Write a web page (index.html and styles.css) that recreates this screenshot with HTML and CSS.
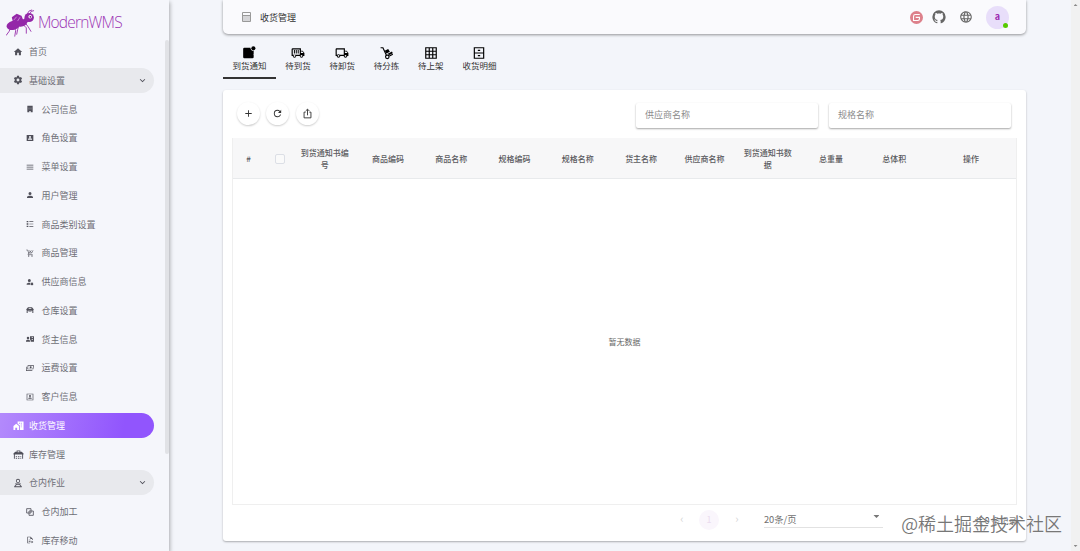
FILE: index.html
```html
<!DOCTYPE html>
<html lang="zh-CN">
<head>
  <meta charset="UTF-8">
  <meta name="viewport" content="width=device-width, initial-scale=1.0">
  <title>ModernWMS</title>
  <link rel="stylesheet" href="styles.css">
</head>
<body>
  <div class="app">
    <aside class="sidebar">
      <div class="logo">
        <svg class="ant" viewBox="0 0 30 28">
          <g fill="#9427a8">
            <ellipse cx="7.5" cy="16.500" rx="7" ry="4.6" transform="rotate(-14 7.5 16.5)"/>
            <ellipse cx="16.5" cy="14" rx="5.500" ry="3.6" transform="rotate(-18 16.5 14)"/>
            <path d="M6 8l5-3.500 5 2 2 5-6 3-5-2z"/>
            <ellipse cx="24" cy="8.3" rx="4.9" ry="4.6"/>
            <path d="M17 12l4-5 4 4-6 5z"/>
          </g>
          <g fill="none" stroke="#9427a8" stroke-width="0.9">
            <path d="M5 19l-2 4-3 4M9 19l1 3-1 6M13 17l-1 4-1 5M18 16l3 3 0 6M20 14l3 4 3 5M22 4.500l2-3 3-1M25 4l1-2 3-.8"/>
          </g>
          <path d="M8 11l3-3.500M12 12l2.500-4" stroke="#e9c8f0" stroke-width="0.6"/>
          <circle cx="25" cy="7.500" r="1.800" fill="#fff"/>
          <circle cx="25.200" cy="7.600" r="0.900" fill="#6a1680"/>
        </svg>
        <span class="logo-text">ModernWMS</span>
      </div>

      <nav class="menu">
        <div class="item">
          <svg viewBox="0 0 24 24"><path d="M10,20V14H14V20H19V12H22L12,3L2,12H5V20H10Z"/></svg>
          <span>首页</span>
        </div>
        <div class="item open">
          <svg viewBox="0 0 24 24"><path d="M12,15.5A3.5,3.5 0 0,1 8.5,12A3.5,3.5 0 0,1 12,8.5A3.5,3.5 0 0,1 15.5,12A3.5,3.5 0 0,1 12,15.5M19.43,12.97C19.47,12.65 19.5,12.33 19.5,12C19.5,11.67 19.47,11.34 19.43,11L21.54,9.37C21.73,9.22 21.78,8.95 21.66,8.73L19.66,5.27C19.54,5.05 19.27,4.96 19.05,5.05L16.56,6.05C16.04,5.66 15.5,5.32 14.87,5.07L14.5,2.42C14.46,2.18 14.25,2 14,2H10C9.75,2 9.54,2.18 9.5,2.42L9.13,5.07C8.5,5.32 7.96,5.66 7.44,6.05L4.95,5.05C4.73,4.96 4.46,5.05 4.34,5.27L2.34,8.73C2.21,8.95 2.27,9.22 2.46,9.37L4.57,11C4.53,11.34 4.5,11.67 4.5,12C4.5,12.33 4.53,12.65 4.57,12.97L2.46,14.63C2.27,14.78 2.21,15.05 2.34,15.27L4.34,18.73C4.46,18.95 4.73,19.03 4.95,18.95L7.44,17.94C7.96,18.34 8.5,18.68 9.13,18.93L9.5,21.58C9.54,21.82 9.75,22 10,22H14C14.25,22 14.46,21.82 14.5,21.58L14.87,18.93C15.5,18.67 16.04,18.34 16.56,17.94L19.05,18.95C19.27,19.03 19.54,18.95 19.66,18.73L21.66,15.27C21.78,15.05 21.73,14.78 21.54,14.63L19.43,12.97Z"/></svg>
          <span>基础设置</span>
          <svg class="arrow" viewBox="0 0 24 24"><path d="M7.41,8.58L12,13.17L16.59,8.58L18,10L12,16L6,10L7.41,8.58Z"/></svg>
        </div>
        <div class="item sub">
          <svg viewBox="0 0 24 24"><path fill-rule="evenodd" d="M4 2h16v20h-6v-4h-4v4H4zM8 6v1h2V6zm6 0v1h2V6zM8 10v1h2v-1zm6 0v1h2v-1zM8 14v1h2v-1zm6 0v1h2v-1z"/></svg>
          <span>公司信息</span>
        </div>
        <div class="item sub">
          <svg viewBox="0 0 24 24"><path fill-rule="evenodd" d="M2 3h20v18H2zM12 6a3 3 0 0 0 0 6a3 3 0 0 0 0-6M6 17h12v-1c0-2-4-3-6-3s-6 1-6 3z"/></svg>
          <span>角色设置</span>
        </div>
        <div class="item sub">
          <svg viewBox="0 0 24 24"><path d="M2,5H22V7.500H2V5M2,11H22V13.500H2V11M2,17H22V19.500H2V17Z"/></svg>
          <span>菜单设置</span>
        </div>
        <div class="item sub">
          <svg viewBox="0 0 24 24"><path d="M12,3A4.500,4.500 0 0,1 16.500,7.500A4.500,4.500 0 0,1 12,12A4.500,4.500 0 0,1 7.500,7.500A4.500,4.500 0 0,1 12,3M12,14C16.42,14 21,15.79 21,18V21H3V18C3,15.79 7.58,14 12,14Z"/></svg>
          <span>用户管理</span>
        </div>
        <div class="item sub">
          <svg viewBox="0 0 24 24"><path d="M2 3h5v4H2zM10 4h12v2H10zM2 10h5v4H2zM10 11h12v2H10zM2 17h5v4H2zM10 18h12v2H10z"/></svg>
          <span>商品类别设置</span>
        </div>
        <div class="item sub">
          <svg viewBox="0 0 24 24"><path d="M1 3h4l3 9h9l4-8M8 12l-2 5h14M9 4l7 7M16 4l-6 7" fill="none" stroke="#50505a" stroke-width="2"/><circle cx="8" cy="21" r="2"/><circle cx="18" cy="21" r="2"/></svg>
          <span>商品管理</span>
        </div>
        <div class="item sub">
          <svg viewBox="0 0 24 24"><path d="M10 3a4.500 4.500 0 1 1 0 9a4.500 4.500 0 0 1 0-9M2 20v-2c0-2.200 3.600-4 8-4h3v6zM18 13l1 1.500 2-.5 1 2-1.500 1.500 1.500 2-1 2-2-.5-1 1.500-1-1.500-2 .5-1-2 1.500-2-1.500-1.500 1-2 2 .5z"/></svg>
          <span>供应商信息</span>
        </div>
        <div class="item sub">
          <svg viewBox="0 0 24 24"><path fill-rule="evenodd" d="M1 10l5-6h12l5 6v2h-1v9h-3v-7H5v7H2v-9H1zM8 6v2h8V6zM8 16h3v2H8zM13 16h3v2h-3z"/></svg>
          <span>仓库设置</span>
        </div>
        <div class="item sub">
          <svg class="wide" viewBox="0 0 24 24"><path fill-rule="evenodd" d="M6 5a3.800 3.800 0 1 1 0 7.600a3.800 3.800 0 0 1 0-7.600M0 20v-2c0-3 3-4 6-4s6 1 6 4v2zM12 4h12v16H14v-3l-2-4zM17 7v2h4V7zM17 12v2h4v-2z"/></svg>
          <span>货主信息</span>
        </div>
        <div class="item sub">
          <svg viewBox="0 0 24 24"><path fill-rule="evenodd" d="M5 4h19l-2 12H4zM7 6L6 14h14l1.500-8zM14 7a3 3 0 1 1 0 6a3 3 0 0 1 0-6M0 8h2v11h17v2H0z"/></svg>
          <span>运费设置</span>
        </div>
        <div class="item sub">
          <svg viewBox="0 0 24 24"><path fill-rule="evenodd" d="M2 2h20v20H2zM4 4v16h16V4zM12 6a3 3 0 1 1 0 6a3 3 0 0 1 0-6M7 17v-1c0-3 10-3 10 0v1z"/></svg>
          <span>客户信息</span>
        </div>
        <div class="item active">
          <svg class="big" viewBox="0 0 24 24"><path fill-rule="evenodd" d="M1 13l6-5 6 5v9H9v-5H5v5H1zM10 3h13v19h-8V12l-5-4zM13 6v2h2V6zm4 0v2h2V6zm0 4v2h2v-2zm0 4v2h2v-2z"/></svg>
          <span>收货管理</span>
        </div>
        <div class="item">
          <svg class="big" viewBox="0 0 24 24"><path fill-rule="evenodd" d="M1 10l4-4h3V3h8v3h3l4 4v2h-1v9h-2v-9H4v9H2v-9H1zM10 5v2h4V5zM6 15h3v2H6zM11 15h3v2h-3zM16 15h2v2h-2zM6 19h3v2H6zM11 19h3v2h-3zM16 19h2v2h-2z"/></svg>
          <span>库存管理</span>
        </div>
        <div class="item open">
          <svg viewBox="0 0 24 24"><path fill-rule="evenodd" d="M12 2a5 5 0 1 1 0 10a5 5 0 0 1 0-10M12 4a3 3 0 1 0 0 6a3 3 0 0 0 0-6M5 13h14v2H5zM8 15h8l5 5v2H3v-2zM9 16l-3 4h12l-3-4z"/></svg>
          <span>仓内作业</span>
          <svg class="arrow" viewBox="0 0 24 24"><path d="M7.41,8.58L12,13.17L16.59,8.58L18,10L12,16L6,10L7.41,8.58Z"/></svg>
        </div>
        <div class="item sub">
          <svg viewBox="0 0 24 24"><path d="M2 2h13v13H2zM9 9h13v13H9z" fill="none" stroke="#50505a" stroke-width="2.500"/></svg>
          <span>仓内加工</span>
        </div>
        <div class="item sub">
          <svg viewBox="0 0 24 24"><path fill-rule="evenodd" d="M4 2h10l6 6v4h-2V9h-5V4H6v16h6v2H4zM8 11h6v2H8zM8 15h5v2H8zM17 14l5 4-5 4v-3h-4v-2h4z"/></svg>
          <span>库存移动</span>
        </div>
      </nav>
      <div class="side-thumb"></div>
    </aside>

    <main class="main">
      <header class="header">
        <svg class="page-icon" viewBox="0 0 9 10"><path fill="#d5d5d8" d="M1 4h7v5H1z"/><path fill="none" stroke="#999" d="M.5.5h8v9h-8zM0 3.500h9"/></svg>
        <span class="title">收货管理</span>
        <div class="tools">
          <svg class="gitee" viewBox="0 0 24 24"><circle cx="12" cy="12" r="12" fill="#dd808b"/><path d="M18 6.500h-8q-3.500 0-3.500 3.500v7.500h8q3 0 3-3v-2.700h-7" fill="none" stroke="#fff" stroke-width="2"/></svg>
          <svg class="github" viewBox="0 0 24 24"><path d="M12,2A10,10 0 0,0 2,12C2,16.42 4.87,20.17 8.84,21.5C9.34,21.58 9.5,21.27 9.5,21C9.5,20.77 9.5,20.14 9.5,19.31C6.73,19.91 6.14,17.97 6.14,17.97C5.68,16.81 5.03,16.5 5.03,16.5C4.12,15.88 5.1,15.9 5.1,15.9C6.1,15.97 6.63,16.93 6.63,16.93C7.5,18.45 8.97,18 9.54,17.76C9.63,17.11 9.89,16.67 10.17,16.42C7.95,16.17 5.62,15.31 5.62,11.5C5.62,10.39 6,9.5 6.65,8.79C6.55,8.54 6.2,7.5 6.75,6.15C6.75,6.15 7.59,5.88 9.5,7.17C10.29,6.95 11.15,6.84 12,6.84C12.85,6.84 13.71,6.95 14.5,7.17C16.41,5.88 17.25,6.15 17.25,6.15C17.8,7.5 17.45,8.54 17.35,8.79C18,9.5 18.38,10.39 18.38,11.5C18.38,15.32 16.04,16.16 13.81,16.41C14.17,16.72 14.5,17.33 14.5,18.26C14.5,19.6 14.5,20.68 14.5,21C14.5,21.27 14.66,21.59 15.17,21.5C19.14,20.16 22,16.42 22,12A10,10 0 0,0 12,2Z"/></svg>
          <svg class="web" viewBox="0 0 24 24"><path d="M16.36,14C16.44,13.34 16.5,12.68 16.5,12C16.5,11.32 16.44,10.66 16.36,10H19.74C19.9,10.64 20,11.31 20,12C20,12.69 19.9,13.36 19.74,14M14.59,19.56C15.19,18.45 15.65,17.25 15.97,16H18.92C17.96,17.65 16.43,18.93 14.59,19.56M14.34,14H9.66C9.56,13.34 9.5,12.68 9.5,12C9.5,11.32 9.56,10.65 9.66,10H14.34C14.43,10.65 14.5,11.32 14.5,12C14.5,12.68 14.43,13.34 14.34,14M12,19.96C11.17,18.76 10.5,17.43 10.09,16H13.91C13.5,17.43 12.83,18.76 12,19.96M8,8H5.08C6.03,6.34 7.57,5.06 9.4,4.44C8.8,5.55 8.35,6.75 8,8M5.08,16H8C8.35,17.25 8.8,18.45 9.4,19.56C7.57,18.93 6.03,17.65 5.08,16M4.26,14C4.1,13.36 4,12.69 4,12C4,11.31 4.1,10.64 4.26,10H7.64C7.56,10.66 7.5,11.32 7.5,12C7.5,12.68 7.56,13.34 7.64,14M12,4.03C12.83,5.23 13.5,6.57 13.91,8H10.09C10.5,6.57 11.17,5.23 12,4.03M18.92,8H15.97C15.65,6.75 15.19,5.55 14.59,4.44C16.43,5.07 17.96,6.34 18.92,8M12,2C6.47,2 2,6.5 2,12A10,10 0 0,0 12,22A10,10 0 0,0 22,12A10,10 0 0,0 12,2Z"/></svg>
          <div class="avatar">a<i class="online"></i></div>
        </div>
      </header>

      <div class="tabs">
        <div class="tab selected">
          <svg viewBox="0 0 24 24"><circle cx="19.500" cy="4" r="3.500"/><path d="M4 3h10.500c0 3.500 2 5.500 5.500 5.500V14l-6 7H4q-2 0-2-2V5q0-2 2-2z"/><path d="M14 21v-6h6v4q0 2-2 2z"/></svg>
          <span>到货通知</span>
        </div>
        <div class="tab">
          <svg viewBox="0 0 24 24"><path fill-rule="evenodd" d="M3 4h14v4h3l3 4v5h-2a3 3 0 0 1-6 0H9a3 3 0 0 1-6 0H1V6q0-2 2-2M3 6v9h12V6zM17 9.500V12h4.500l-2-2.500zM6 15.500a1.500 1.500 0 1 0 0 3a1.500 1.500 0 0 0 0-3M18 15.500a1.500 1.500 0 1 0 0 3a1.500 1.500 0 0 0 0-3M5 7h1.700v6H5zM8.200 7h1.700v6H8.200zM11.500 7h1.700v6h-1.700z"/></svg>
          <span>待到货</span>
        </div>
        <div class="tab">
          <svg viewBox="0 0 24 24"><path d="M18 18.5C18.83 18.5 19.5 17.83 19.5 17C19.5 16.17 18.83 15.5 18 15.5C17.17 15.5 16.5 16.17 16.5 17C16.5 17.83 17.17 18.5 18 18.5M19.5 9.5H17V12H21.46L19.5 9.5M6 18.5C6.83 18.5 7.5 17.83 7.5 17C7.5 16.17 6.83 15.5 6 15.5C5.17 15.5 4.5 16.17 4.5 17C4.5 17.83 5.17 18.5 6 18.5M20 8L23 12V17H21C21 18.66 19.66 20 18 20C16.34 20 15 18.66 15 17H9C9 18.66 7.66 20 6 20C4.34 20 3 18.66 3 17H1V6C1 4.89 1.89 4 3 4H17V8H20M3 6V15H3.76C4.31 14.39 5.11 14 6 14C6.89 14 7.69 14.39 8.24 15H15V6H3Z"/></svg>
          <span>待卸货</span>
        </div>
        <div class="tab">
          <svg viewBox="0 0 24 24"><path d="M1 3h4l6 13" fill="none" stroke="#000" stroke-width="2"/><path d="M8 8l6-3 3 5-6 3zM12.500 13.500l8-4 1.500 3-6 3z"/><circle cx="12.500" cy="18.500" r="3" fill="none" stroke="#000" stroke-width="2"/><path d="M16 17l6-3" stroke="#000" stroke-width="2"/></svg>
          <span>待分拣</span>
        </div>
        <div class="tab">
          <svg viewBox="0 0 24 24"><path d="M3 3h18v18H3zM9 3v18M15 3v18M3 9h18M3 15h18" fill="none" stroke="#000" stroke-width="2"/></svg>
          <span>待上架</span>
        </div>
        <div class="tab">
          <svg viewBox="0 0 24 24"><path d="M4 3h16v18H4zM4 12h16M10 7.500h4M10 16.500h4" fill="none" stroke="#000" stroke-width="2"/></svg>
          <span>收货明细</span>
        </div>
      </div>

      <section class="card">
        <div class="toolbar">
          <div class="round"><svg viewBox="0 0 24 24"><path d="M19,13H13V19H11V13H5V11H11V5H13V11H19V13Z"/></svg></div>
          <div class="round"><svg viewBox="0 0 24 24"><path d="M17.65,6.35C16.2,4.9 14.21,4 12,4A8,8 0 0,0 4,12A8,8 0 0,0 12,20C15.73,20 18.84,17.45 19.73,14H17.65C16.83,16.33 14.61,18 12,18A6,6 0 0,1 6,12A6,6 0 0,1 12,6C13.66,6 15.14,6.69 16.22,7.78L13,11H20V4L17.65,6.35Z"/></svg></div>
          <div class="round"><svg viewBox="0 0 24 24"><path d="M8 9H4.500v12.500h15V9H16M12 16V3M8 6.500l4-4 4 4" fill="none" stroke="#333" stroke-width="2"/></svg></div>
          <div class="search first">供应商名称</div>
          <div class="search">规格名称</div>
        </div>

        <div class="table">
          <div class="thead">
            <div>#</div>
            <div><i class="check"></i></div>
            <div>到货通知书编号</div>
            <div>商品编码</div>
            <div>商品名称</div>
            <div>规格编码</div>
            <div>规格名称</div>
            <div>货主名称</div>
            <div>供应商名称</div>
            <div>到货通知书数据</div>
            <div>总重量</div>
            <div>总体积</div>
            <div>操作</div>
          </div>
          <div class="empty">暂无数据</div>
        </div>

        <div class="pager">
          <span class="prev">‹</span>
          <span class="page">1</span>
          <span class="next">›</span>
          <div class="select">20条/页<i class="caret"></i></div>
          <span class="total">共 0 条记录</span>
        </div>
      </section>
    </main>

    <div class="scrollbar">
      <i class="up"></i>
      <i class="down"></i>
    </div>
  </div>
  <div class="watermark">@稀土掘金技术社区</div>
</body>
</html>
```

FILE: styles.css
```css
* {
  box-sizing: border-box;
}
body {
  margin: 0;
  height: 551px;
  overflow: hidden;
  position: relative;
  background-color: #f3f5fa;
  font-family: "Noto Sans CJK SC", "Noto Sans", sans-serif;
  font-size: 9px;
  color: #666;
}
svg {
  display: block;
  flex: none;
}
.app {
  display: flex;
  height: 551px;
}

/* sidebar */
.sidebar {
  position: relative;
  width: 169px;
  flex: none;
  overflow: hidden;
  background-color: #f5f6fb;
  box-shadow: 1px 2px 4px rgba(0, 0, 0, 0.3);
}
.logo {
  display: flex;
  height: 37px;
  padding: 9px 0 0 6px;
}
.ant {
  width: 29px;
  height: 28px;
}
.logo-text {
  margin-left: 3px;
  font-family: "Open Sans", sans-serif;
  font-weight: 300;
  font-size: 15.500px;
  line-height: 27px;
  letter-spacing: -0.800px;
  color: #9c35b4;
}
.menu {
  padding-top: 2px;
}
.item {
  display: flex;
  align-items: center;
  width: 153.500px;
  height: 25px;
  margin-bottom: 3.750px;
  padding-left: 13px;
  border-radius: 0 13px 13px 0;
  color: #6e6e76;
}
.item svg {
  width: 10px;
  height: 10px;
  margin-right: 6px;
  fill: #50505a;
}
.item svg.big {
  width: 11px;
  height: 11px;
  margin: 0 5.500px 0 -0.500px;
}
.item.sub {
  padding-left: 26px;
}
.item.sub svg {
  width: 8px;
  height: 8px;
  margin-right: 7.500px;
}
.item.open {
  background-color: #e8e9ed;
}
.item svg.arrow {
  margin: 0 6px 0 auto;
  width: 11px;
  height: 11px;
}
.item.active {
  color: #fff;
  background: linear-gradient(100deg, #b38afc, #9155fd 80%);
}
.item.active svg {
  fill: #fff;
}
.side-thumb {
  position: absolute;
  top: 40px;
  right: 0;
  width: 4px;
  height: 414px;
  border-radius: 2px;
  background-color: #e1e2e6;
}

/* main */
.main {
  width: 803px;
  margin-left: 54px;
}
.header {
  display: flex;
  align-items: center;
  height: 34px;
  padding: 0 17px 0 19px;
  border-radius: 0 0 5px 5px;
  background-color: #fafafd;
  box-shadow: 0 1px 3px rgba(0, 0, 0, 0.4);
}
.page-icon {
  width: 9px;
  height: 10px;
}
.title {
  margin-left: 9px;
  color: #333;
}
.tools {
  display: flex;
  align-items: center;
  margin-left: auto;
  fill: #666;
}
.gitee {
  width: 13px;
  height: 13px;
}
.github {
  width: 16px;
  height: 16px;
  margin-left: 8px;
}
.web {
  width: 14px;
  height: 14px;
  margin-left: 12px;
}
.avatar {
  position: relative;
  width: 23px;
  height: 23px;
  margin-left: 13px;
  border-radius: 50%;
  background-color: #e8defa;
  color: #9c27b0;
  font-weight: 700;
  line-height: 22px;
  text-align: center;
}
.online {
  position: absolute;
  right: 1px;
  bottom: 1px;
  width: 5px;
  height: 5px;
  border-radius: 50%;
  background-color: #56ca00;
}

.tabs {
  display: flex;
  height: 45px;
  margin-bottom: 11px;
}
.tab {
  display: flex;
  flex-direction: column;
  align-items: center;
  padding: 12px 9.400px 0;
  font-size: 8.500px;
  line-height: 12px;
  color: #333;
}
.tab svg {
  width: 14px;
  height: 14px;
  margin-bottom: -1.500px;
}
.tab.selected {
  border-bottom: 2px solid #333;
}

.card {
  height: 451px;
  padding: 13px 9px 0;
  border-radius: 3px;
  background-color: #fff;
  box-shadow: 0 1px 2px rgba(0, 0, 0, 0.3);
}
.toolbar {
  display: flex;
  height: 35px;
  padding: 0 6px 0 5px;
}
.round {
  display: flex;
  align-items: center;
  justify-content: center;
  width: 23px;
  height: 23px;
  margin: -1px 6.300px 0 0;
  border-radius: 50%;
  box-shadow: 0 1px 2px rgba(0, 0, 0, 0.2);
}
.round svg {
  width: 11px;
  height: 11px;
  fill: #333;
}
.search {
  width: 182px;
  height: 25px;
  margin-left: 11px;
  padding-left: 9px;
  border-radius: 2px;
  line-height: 24px;
  color: #8c8c8c;
  box-shadow: 0 1px 2px rgba(0, 0, 0, 0.35);
}
.search.first {
  margin-left: auto;
}

.table {
  height: 367px;
  border: 1px solid #efefef;
  border-top: none;
}
.thead {
  display: grid;
  grid-template-columns: 31px 29px repeat(10, 63.300px) 1fr;
  align-items: center;
  height: 41px;
  padding-top: 2px;
  background-color: #f7f7f8;
  border-bottom: 1px solid #e8eaec;
  font-size: 8px;
  font-weight: 500;
  line-height: 12px;
  text-align: center;
  color: #5a5a5e;
}
.thead div {
  padding: 0 7px;
}
.check {
  display: block;
  width: 10px;
  height: 10px;
  margin-left: 4px;
  border: 1px solid #dcdfe6;
  border-radius: 2px;
  background-color: #fafafa;
}
.empty {
  height: 325px;
  line-height: 325px;
  text-align: center;
  font-size: 8px;
}

.pager {
  display: flex;
  align-items: center;
  height: 29px;
  padding-left: 446px;
  color: #bbb;
}
.prev,
.next {
  width: 8px;
  font-size: 11px;
  line-height: 18px;
  padding-bottom: 3px;
  text-align: center;
  color: #d4d4d4;
}
.page {
  width: 20px;
  height: 20px;
  margin: 0 14px 0 13px;
  border-radius: 50%;
  background-color: #faf6fc;
  line-height: 19px;
  text-align: center;
  color: #eadcef;
}
.select {
  display: flex;
  justify-content: space-between;
  width: 120px;
  height: 17px;
  margin-left: 23px;
  border-bottom: 1px solid #e2e2e2;
  font-size: 9.300px;
  line-height: 16px;
  color: #707070;
}
.caret {
  margin: 4px 4px 0 0;
  width: 6px;
  height: 3px;
  background-color: #777;
  clip-path: polygon(0 0, 100% 0, 50% 100%);
}
.total {
  margin-left: 91px;
  font-size: 8.500px;
  line-height: 14px;
  white-space: nowrap;
  color: #555;
}

/* page scrollbar */
.scrollbar {
  display: flex;
  flex-direction: column;
  justify-content: space-between;
  align-items: center;
  width: 9px;
  margin-left: auto;
  padding: 4px 0;
  background-color: #f1f1f1;
}
.up,
.down {
  width: 4px;
  height: 2px;
  background-color: #888;
  clip-path: polygon(50% 0, 100% 100%, 0 100%);
}
.down {
  clip-path: polygon(0 0, 100% 0, 50% 100%);
}
.watermark {
  position: absolute;
  right: 18px;
  bottom: 14px;
  font-size: 18px;
  font-weight: 350;
  line-height: 27px;
  color: #777;
  text-shadow: 0 0 1px #fff;
}
```
